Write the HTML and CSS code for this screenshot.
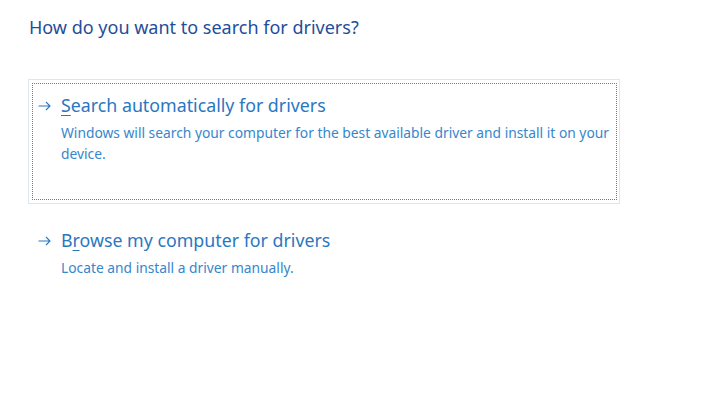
FILE: index.html
```html
<!DOCTYPE html>
<html lang="en">
<head>
  <meta charset="UTF-8" />
  <title>Update Drivers</title>
  <link rel="stylesheet" href="styles.css">
</head>
<body>
  <div class="page-title">How do you want to search for drivers?</div>

  <div class="options">
    <div class="option focused">
      <div class="option-inner">
        <svg class="arrow" width="13" height="10" viewBox="0 0 13 10">
          <path d="M0.5 5H12M8 1L12 5L8 9" fill="none" stroke="currentColor" stroke-width="1.1"/>
        </svg>
        <div class="option-text">
          <div class="option-title"><u>S</u>earch automatically for drivers</div>
          <div class="option-desc">Windows will search your computer for the best available driver and install it on your device.</div>
        </div>
      </div>
    </div>

    <div class="option">
      <div class="option-inner">
        <svg class="arrow" width="13" height="10" viewBox="0 0 13 10">
          <path d="M0.5 5H12M8 1L12 5L8 9" fill="none" stroke="currentColor" stroke-width="1.1"/>
        </svg>
        <div class="option-text">
          <div class="option-title">B<u>r</u>owse my computer for drivers</div>
          <div class="option-desc">Locate and install a driver manually.</div>
        </div>
      </div>
    </div>
  </div>
</body>
</html>
```

FILE: styles.css
```css
body {
  font-family: "Noto Sans", "Open Sans", sans-serif;
  background-color: #fff;
  margin: 0;
  padding: 14px 0 0 29px;
}
.page-title {
  font-size: 18px;
  color: #1f4e99;
  line-height: 26px;
}
.options {
  margin-top: 39px;
  margin-left: -1px;
  width: 592px;
  display: flex;
  flex-direction: column;
  gap: 10px;
}
.option {
  border: 1px solid transparent;
  padding: 3px 2px 3px 3px;
}
.option.focused {
  border-color: #dce7f0;
}
.option-inner {
  display: flex;
  border: 1px dotted transparent;
  padding: 8px 0 35px 5px;
}
.focused .option-inner {
  border-color: #7a7a7a;
}
.arrow {
  flex-shrink: 0;
  color: #2a77c0;
  margin: 9px 10px 0 0;
}
.option-title {
  font-size: 17.8px;
  line-height: 26px;
  color: #2a77c0;
  margin-bottom: 4px;
}
.option-title u {
  text-decoration-thickness: 1px;
  text-underline-offset: 3px;
}
.option-desc {
  font-size: 13.8px;
  line-height: 21px;
  color: #3686cc;
}
```
